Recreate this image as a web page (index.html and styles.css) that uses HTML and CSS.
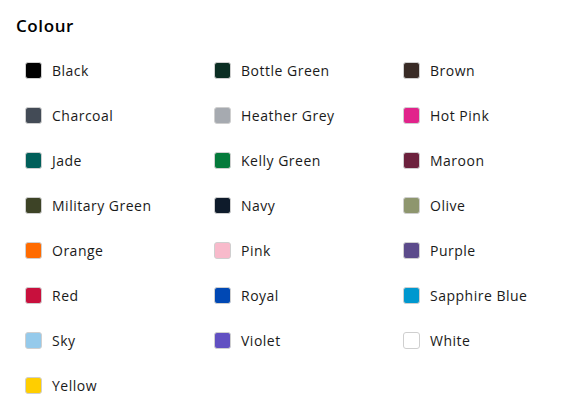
FILE: index.html
```html
<!DOCTYPE html>
<html>
<head>
<meta charset="utf-8">
<link rel="stylesheet" href="styles.css">
</head>
<body>
<section class="colour-filter">
  <h2 class="title">Colour</h2>
  <ul class="swatches">
    <li class="opt"><span class="sw" style="background:#000000"></span>Black</li>
    <li class="opt"><span class="sw" style="background:#0b2e23"></span>Bottle Green</li>
    <li class="opt"><span class="sw" style="background:#392b26"></span>Brown</li>
    <li class="opt"><span class="sw" style="background:#434b56"></span>Charcoal</li>
    <li class="opt"><span class="sw" style="background:#a6aab0"></span>Heather Grey</li>
    <li class="opt"><span class="sw" style="background:#e1238b"></span>Hot Pink</li>
    <li class="opt"><span class="sw" style="background:#015f5a"></span>Jade</li>
    <li class="opt"><span class="sw" style="background:#047a3b"></span>Kelly Green</li>
    <li class="opt"><span class="sw" style="background:#6c213d"></span>Maroon</li>
    <li class="opt"><span class="sw" style="background:#3d4326"></span>Military Green</li>
    <li class="opt"><span class="sw" style="background:#0e1b2b"></span>Navy</li>
    <li class="opt"><span class="sw" style="background:#8e966e"></span>Olive</li>
    <li class="opt"><span class="sw" style="background:#ff6b00"></span>Orange</li>
    <li class="opt"><span class="sw" style="background:#f8bacb"></span>Pink</li>
    <li class="opt"><span class="sw" style="background:#5c4b8b"></span>Purple</li>
    <li class="opt"><span class="sw" style="background:#c8103d"></span>Red</li>
    <li class="opt"><span class="sw" style="background:#0048b4"></span>Royal</li>
    <li class="opt"><span class="sw" style="background:#0098cf"></span>Sapphire Blue</li>
    <li class="opt"><span class="sw" style="background:#95caeb"></span>Sky</li>
    <li class="opt"><span class="sw" style="background:#6150c2"></span>Violet</li>
    <li class="opt"><span class="sw" style="background:#ffffff"></span>White</li>
    <li class="opt"><span class="sw" style="background:#ffce00"></span>Yellow</li>
  </ul>
</section>
</body>
</html>
```
FILE: styles.css
```css
html, body {
  margin: 0;
  padding: 0;
  background: #ffffff;
}
body {
  font-family: "Open Sans", "Noto Sans", sans-serif;
  color: #111111;
}
.colour-filter {
  padding: 14px 16px 0 16px;
}
.title {
  margin: 0;
  font-size: 17px;
  font-weight: 600;
  letter-spacing: 0.6px;
  line-height: 24px;
  color: #000;
}
.swatches {
  list-style: none;
  margin: 0;
  padding: 10px 0 0 9px;
  display: grid;
  grid-template-columns: 189px 189px 150px;
}
.opt {
  display: flex;
  align-items: center;
  height: 45px;
  font-size: 14px;
  letter-spacing: 0.5px;
  color: #1a1a1a;
}
.sw {
  width: 15px;
  height: 15px;
  border: 1px solid #cfcfcf;
  border-radius: 3px;
  margin-right: 10px;
  flex: none;
}
```
